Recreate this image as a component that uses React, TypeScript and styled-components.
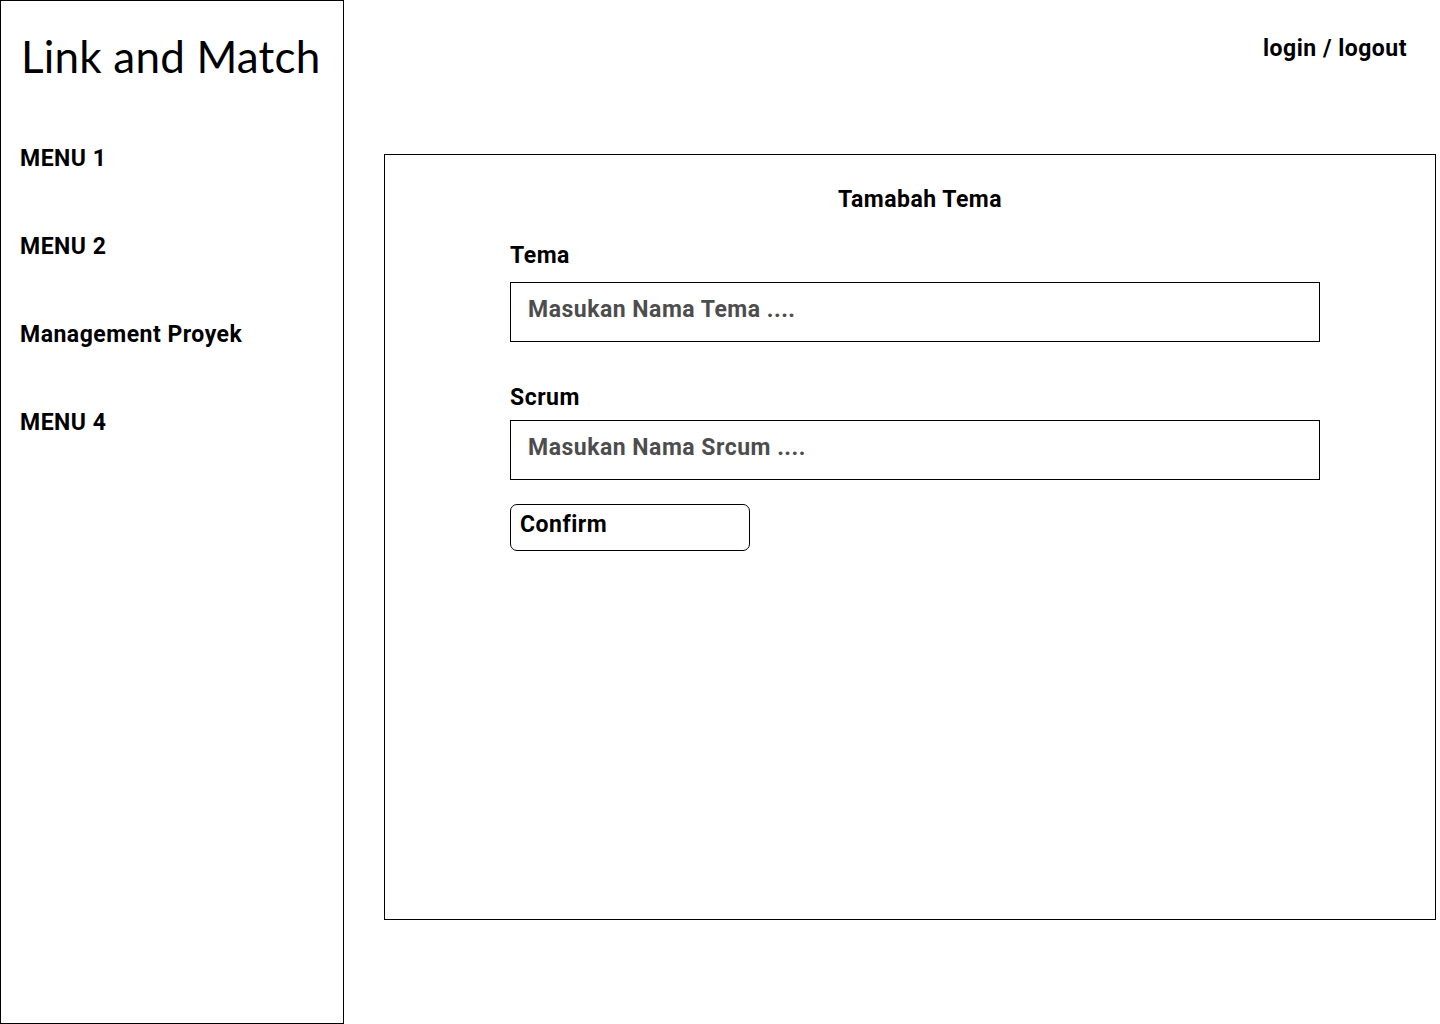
import { FC } from 'react';
import styled, { createGlobalStyle } from 'styled-components';

const GlobalStyle = createGlobalStyle`
  * {
    box-sizing: border-box;
  }

  body {
    margin: 0;
    background: #ffffff;
    color: #000000;
    font-family: Roboto, 'Liberation Sans', sans-serif;
  }
`;

const menuList = ['MENU 1', 'MENU 2', 'Management Proyek', 'MENU 4'];

const StyledPage = styled.div`
  display: flex;
  width: 1440px;
  height: 1024px;
`;

const StyledSidebar = styled.aside`
  width: 344px;
  height: 1024px;
  flex-shrink: 0;
  border: 1px solid #000000;
  padding: 28px 0 0 19px;
`;

const StyledLogo = styled.h1`
  margin: 0 0 0 1px;
  font-family: Lato, 'Open Sans', sans-serif;
  font-weight: 400;
  font-size: 44px;
  line-height: 54px;
  letter-spacing: 0.2px;
`;

const StyledMenu = styled.ul`
  list-style: none;
  margin: 64px 0 0;
  padding: 0;
  display: flex;
  flex-direction: column;
  gap: 64px;
`;

const StyledMenuItem = styled.li`
  font-size: 23px;
  font-weight: 700;
  letter-spacing: 0.5px;
  line-height: 24px;
  cursor: pointer;
`;

const StyledMain = styled.main`
  flex: 1;
  display: flex;
  flex-direction: column;
  padding: 0 4px 0 40px;
`;

const StyledHeader = styled.header`
  display: flex;
  justify-content: flex-end;
  height: 154px;
  padding: 35px 29px 0 0;
`;

const StyledAuth = styled.span`
  font-size: 23px;
  font-weight: 700;
  letter-spacing: 0.5px;
  line-height: 28px;
  height: 28px;
  cursor: pointer;
`;

const StyledPanel = styled.section`
  height: 766px;
  border: 1px solid #000000;
  padding: 32px 0 0 125px;
`;

const StyledTitle = styled.h2`
  margin: 0 0 31px -125px;
  padding-left: 20px;
  text-align: center;
  font-size: 23px;
  font-weight: 700;
  letter-spacing: 0.5px;
  line-height: 26px;
`;

const StyledForm = styled.form`
  width: 810px;
  display: flex;
  flex-direction: column;
`;

const StyledField = styled.label<{ $gap: number; $spacing: number }>`
  display: flex;
  flex-direction: column;
  gap: ${({ $gap }) => $gap}px;
  margin-bottom: ${({ $spacing }) => $spacing}px;
`;

const StyledLabel = styled.span`
  font-size: 23px;
  font-weight: 700;
  letter-spacing: 0.5px;
  line-height: 24px;
`;

const StyledInput = styled.input`
  height: 60px;
  width: 810px;
  border: 1px solid #000000;
  border-radius: 0;
  padding: 0 17px 6px;
  font-family: Roboto, 'Liberation Sans', sans-serif;
  font-size: 23px;
  font-weight: 700;
  letter-spacing: 0.5px;
  color: #000000;
  outline: none;

  &::placeholder {
    color: #4d4d4d;
    opacity: 1;
  }
`;

const StyledButton = styled.button`
  width: 240px;
  height: 47px;
  border: 1px solid #000000;
  border-radius: 7px;
  background: #ffffff;
  padding: 7px 9px 0;
  text-align: left;
  align-self: flex-start;
  display: flex;
  align-items: flex-start;
  font-family: Roboto, 'Liberation Sans', sans-serif;
  font-size: 23px;
  font-weight: 700;
  letter-spacing: 0.5px;
  line-height: 26px;
  color: #000000;
  cursor: pointer;
`;

const Sidebar: FC = () => (
  <StyledSidebar>
    <StyledLogo>Link and Match</StyledLogo>
    <StyledMenu>
      {menuList.map((item) => (
        <StyledMenuItem key={item}>{item}</StyledMenuItem>
      ))}
    </StyledMenu>
  </StyledSidebar>
);

const App: FC = () => {
  return (
    <>
      <GlobalStyle />
      <StyledPage>
        <Sidebar />
        <StyledMain>
          <StyledHeader>
            <StyledAuth>login / logout</StyledAuth>
          </StyledHeader>
          <StyledPanel>
            <StyledTitle>Tamabah Tema</StyledTitle>
            <StyledForm onSubmit={(event) => event.preventDefault()}>
              <StyledField $gap={14} $spacing={44}>
                <StyledLabel>Tema</StyledLabel>
                <StyledInput placeholder="Masukan Nama Tema ...." />
              </StyledField>
              <StyledField $gap={10} $spacing={24}>
                <StyledLabel>Scrum</StyledLabel>
                <StyledInput placeholder="Masukan Nama Srcum ...." />
              </StyledField>
              <StyledButton type="submit">Confirm</StyledButton>
            </StyledForm>
          </StyledPanel>
        </StyledMain>
      </StyledPage>
    </>
  );
};

export default App;
